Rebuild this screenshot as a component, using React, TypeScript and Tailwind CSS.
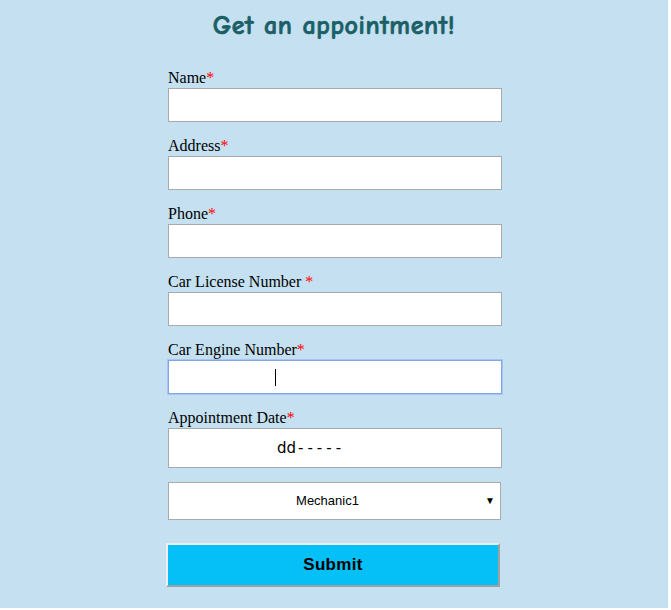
import React from "react";

const fields = [
  { label: "Name", star: "*" },
  { label: "Address", star: "*" },
  { label: "Phone", star: "*" },
  { label: "Car License Number ", star: "*" },
];

function Label({ text, star }: { text: string; star: string }) {
  return (
    <label className="block h-[19px] pt-[1px] mb-[1px] text-[16px] leading-[18px] text-black font-['Liberation_Serif',serif]">
      {text}
      <span className="text-[#ff0000]">{star}</span>
    </label>
  );
}

export default function App() {
  return (
    <div className="w-[671px] h-[610px] bg-white">
      <div className="w-[668px] h-[608px] bg-[#c5e0f1] flex flex-col items-center">
        <h1 className="mt-[10px] h-[32px] text-[26px] leading-[32px] font-bold text-[#1b5f66] font-['Comic_Sans_MS','Comic_Neue',cursive] tracking-[0.6px] [-webkit-text-stroke:0.7px_#1b5f66]">
          Get an appointment!
        </h1>

        <form className="mt-[26px] w-[334px] ml-[2px]" onSubmit={(e) => e.preventDefault()}>
          {fields.map((f) => (
            <div key={f.label} className="mb-[14px]">
              <Label text={f.label} star={f.star} />
              <input
                type="text"
                className="block w-[334px] h-[34px] bg-white border border-[#a9a9a9] outline-none"
              />
            </div>
          ))}

          {/* focused field */}
          <div className="mb-[14px]">
            <Label text="Car Engine Number" star="*" />
            <div className="relative w-[334px] h-[34px] bg-white border border-[#7ea6e8] shadow-[0_0_0_1px_#a9c4f0]">
              <span className="absolute left-[106px] top-[8px] w-[1px] h-[17px] bg-black" />
            </div>
          </div>

          <div className="mb-[14px]">
            <Label text="Appointment Date" star="*" />
            <div className="w-[334px] h-[40px] bg-white border border-[#a9a9a9] flex items-center pl-[108px]">
              <span className="text-[15px] text-black font-['DejaVu_Sans',sans-serif]">
                dd<span className="ml-[2px] tracking-[4px]">-----</span>
              </span>
            </div>
          </div>

          <div className="relative w-[333px] h-[38px] bg-white border border-[#a9a9a9] flex items-center justify-center pr-[14px]">
            <span className="text-[13px] text-black font-['Liberation_Sans',Arial,sans-serif]">Mechanic1</span>
            <span className="absolute right-[5px] top-[10px] text-[10px] text-black">▼</span>
          </div>

          <button
            type="submit"
            className="mt-[23px] -ml-[2px] w-[334px] h-[44px] bg-[#05bff7] border-2 border-t-[#eeeeee] border-l-[#eeeeee] border-r-[#a0a0a0] border-b-[#a0a0a0] text-[17px] font-bold text-black font-['Liberation_Sans',Arial,sans-serif] tracking-[0.3px]"
          >
            Submit
          </button>
        </form>
      </div>
    </div>
  );
}
